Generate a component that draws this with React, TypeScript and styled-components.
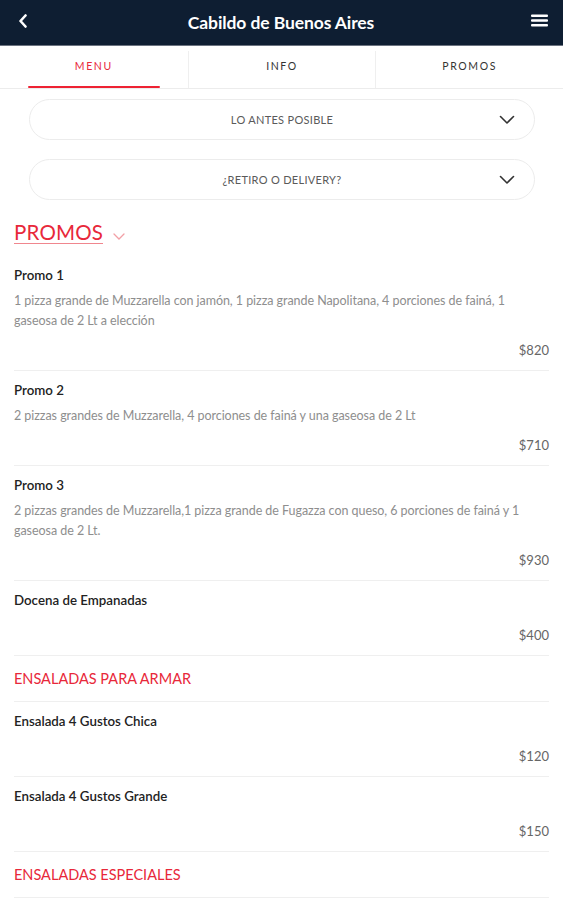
import React from "react";
import styled, { createGlobalStyle } from "styled-components";

const Global = createGlobalStyle`
  html, body { margin: 0; padding: 0; background: #fff; }
  body { font-family: Lato, "Open Sans", "Liberation Sans", sans-serif; -webkit-font-smoothing: antialiased; }
  * { box-sizing: border-box; }
`;

const Page = styled.div`
  width: 563px;
  min-height: 900px;
  background: #fff;
  overflow: hidden;
`;

const TopBar = styled.header`
  height: 46px;
  background: #0e1e32;
  display: flex;
  align-items: center;
  justify-content: space-between;
  padding: 0 14px 0 13px;
  border-bottom: 1px solid #6b7380;
`;

const IconButton = styled.div`
  width: 20px;
  height: 24px;
  display: flex;
  align-items: center;
  justify-content: center;
  margin-top: -4px;
`;

const Title = styled.h1`
  margin: 0;
  font-size: 17.5px;
  font-weight: 700;
  color: #fff;
  letter-spacing: -0.1px;
`;

const Tabs = styled.nav`
  display: grid;
  grid-template-columns: repeat(3, 1fr);
  height: 43px;
  border-bottom: 1px solid #ececec;
`;

const Tab = styled.div<{ $active?: boolean; $divider?: boolean }>`
  position: relative;
  display: flex;
  align-items: center;
  justify-content: center;
  font-size: 10.5px;
  letter-spacing: 1.6px;
  color: ${(p) => (p.$active ? "#e8283a" : "#333")};
  border-left: ${(p) => (p.$divider ? "1px solid #efefef" : "none")};
  margin-top: 5px;
  padding-bottom: 8px;
  &::after {
    content: "";
    display: ${(p) => (p.$active ? "block" : "none")};
    position: absolute;
    left: 15%;
    right: 15%;
    bottom: 0;
    height: 2px;
    background: #ee2233;
    border-radius: 1px;
  }
`;

const Selects = styled.div`
  display: flex;
  flex-direction: column;
  gap: 19px;
  padding: 10px 28px 0 29px;
`;

const Select = styled.div`
  position: relative;
  height: 41px;
  border: 1px solid #ececec;
  border-radius: 21px;
  display: flex;
  align-items: center;
  justify-content: center;
  font-size: 11px;
  color: #5a5a5a;
  letter-spacing: 0.3px;
`;

const SelectChevron = styled.svg`
  position: absolute;
  right: 19px;
  top: 15px;
`;

const Content = styled.main`
  padding: 0 14px;
`;

const PromoHeading = styled.div`
  margin-top: 21px;
  margin-bottom: 12px;
  display: flex;
  align-items: flex-start;
  gap: 10px;
`;

const PromoTitle = styled.span`
  font-size: 20.5px;
  line-height: 22px;
  color: #e8283a;
  border-bottom: 1.5px solid #f0868e;
  letter-spacing: 0.2px;
`;

const SmallChevron = styled.svg`
  margin-top: 12px;
`;

const Item = styled.div`
  padding: 11px 0 12px;
  border-bottom: 1px solid #efefef;
`;

const ItemName = styled.div`
  font-size: 13.3px;
  line-height: 16px;
  color: #222;
  font-weight: 600;
`;

const ItemDesc = styled.div`
  margin-top: 8px;
  font-size: 12.5px;
  line-height: 20px;
  color: #8e8e8e;
  letter-spacing: -0.05px;
`;

const Price = styled.div<{ $hasDesc: boolean }>`
  margin-top: ${(p) => (p.$hasDesc ? "11px" : "19px")};
  text-align: right;
  font-size: 13px;
  line-height: 16px;
  color: #666;
`;

const Section = styled.div`
  padding: 15px 0 14px;
  font-size: 14.5px;
  line-height: 16px;
  color: #e8283a;
  border-bottom: 1px solid #efefef;
`;

type Entry =
  | { kind: "item"; name: string; desc?: string; price: string }
  | { kind: "section"; title: string };

const entries: Entry[] = [
  {
    kind: "item",
    name: "Promo 1",
    desc: "1 pizza grande de Muzzarella con jamón, 1 pizza grande Napolitana, 4 porciones de fainá, 1 gaseosa de 2 Lt a elección",
    price: "$820",
  },
  {
    kind: "item",
    name: "Promo 2",
    desc: "2 pizzas grandes de Muzzarella, 4 porciones de fainá y una gaseosa de 2 Lt",
    price: "$710",
  },
  {
    kind: "item",
    name: "Promo 3",
    desc: "2 pizzas grandes de Muzzarella,1 pizza grande de Fugazza con queso, 6 porciones de fainá y 1 gaseosa de 2 Lt.",
    price: "$930",
  },
  { kind: "item", name: "Docena de Empanadas", price: "$400" },
  { kind: "section", title: "ENSALADAS PARA ARMAR" },
  { kind: "item", name: "Ensalada 4 Gustos Chica", price: "$120" },
  { kind: "item", name: "Ensalada 4 Gustos Grande", price: "$150" },
  { kind: "section", title: "ENSALADAS ESPECIALES" },
];

const Chevron = () => (
  <SelectChevron width="16" height="10" viewBox="0 0 16 10">
    <path d="M1.5 1.5 L8 8 L14.5 1.5" fill="none" stroke="#333" strokeWidth="1.6" strokeLinecap="round" strokeLinejoin="round" />
  </SelectChevron>
);

export default function App() {
  return (
    <Page>
      <Global />
      <TopBar>
        <IconButton>
          <svg width="10" height="14" viewBox="0 0 10 14">
            <path d="M7.5 1.5 L2.5 7 L7.5 12.5" fill="none" stroke="#fff" strokeWidth="2.6" strokeLinecap="round" strokeLinejoin="round" />
          </svg>
        </IconButton>
        <Title>Cabildo de Buenos Aires</Title>
        <IconButton>
          <svg width="17" height="13" viewBox="0 0 17 13">
            <rect x="0" y="0.5" width="17" height="2.4" rx="1" fill="#fff" />
            <rect x="0" y="5.3" width="17" height="2.4" rx="1" fill="#fff" />
            <rect x="0" y="10.1" width="17" height="2.4" rx="1" fill="#fff" />
          </svg>
        </IconButton>
      </TopBar>
      <Tabs>
        <Tab $active>MENU</Tab>
        <Tab $divider>INFO</Tab>
        <Tab $divider>PROMOS</Tab>
      </Tabs>
      <Selects>
        <Select>
          LO ANTES POSIBLE
          <Chevron />
        </Select>
        <Select>
          ¿RETIRO O DELIVERY?
          <Chevron />
        </Select>
      </Selects>
      <Content>
        <PromoHeading>
          <PromoTitle>PROMOS</PromoTitle>
          <SmallChevron width="12" height="7" viewBox="0 0 12 7">
            <path d="M1 1 L6 6 L11 1" fill="none" stroke="#f2a0a6" strokeWidth="1.3" strokeLinecap="round" />
          </SmallChevron>
        </PromoHeading>
        {entries.map((e, i) =>
          e.kind === "section" ? (
            <Section key={i}>{e.title}</Section>
          ) : (
            <Item key={i}>
              <ItemName>{e.name}</ItemName>
              {e.desc && <ItemDesc>{e.desc}</ItemDesc>}
              <Price $hasDesc={!!e.desc}>{e.price}</Price>
            </Item>
          )
        )}
      </Content>
    </Page>
  );
}
